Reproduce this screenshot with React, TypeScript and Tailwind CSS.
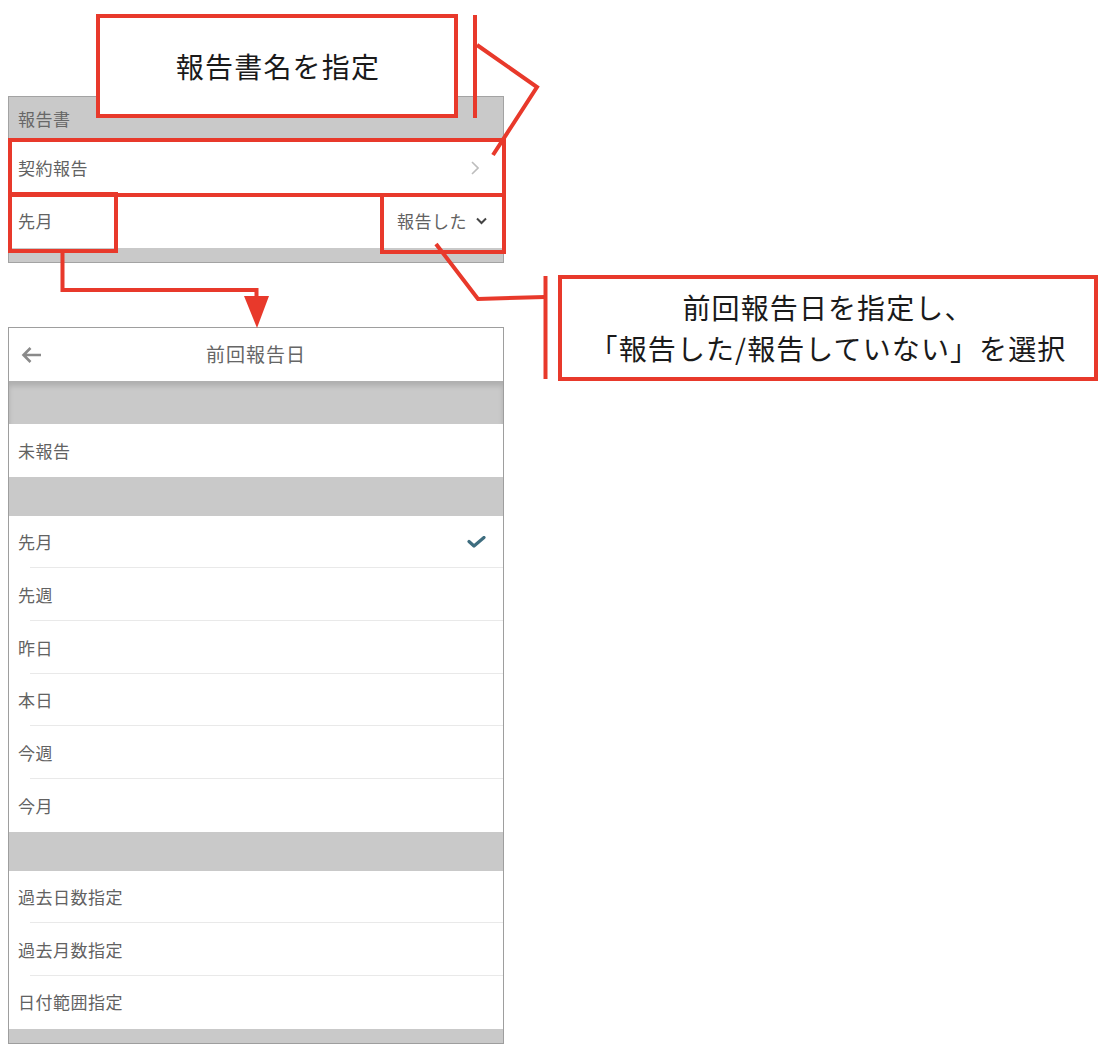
import React from "react";

const RED = "#e8392b";

type Row = { label: string; checked?: boolean };

const groups: Row[][] = [
  [{ label: "未報告" }],
  [
    { label: "先月", checked: true },
    { label: "先週" },
    { label: "昨日" },
    { label: "本日" },
    { label: "今週" },
    { label: "今月" },
  ],
  [{ label: "過去日数指定" }, { label: "過去月数指定" }, { label: "日付範囲指定" }],
];

function CheckIcon() {
  return (
    <svg width="19" height="12" viewBox="0 0 19 12" fill="none">
      <path d="M2 5.5 L7 10 L17 1.5" stroke="#3e6d7f" strokeWidth="3.2" strokeLinecap="round" strokeLinejoin="round" />
    </svg>
  );
}

function OptionRow({ row, last }: { row: Row; last: boolean }) {
  return (
    <div
      className={
        "relative h-[52.67px] bg-white flex items-center justify-between pl-[9px] pr-[17px] text-[17px] tracking-[0.5px] text-[#626262] " +
        (last ? "" : "after:absolute after:left-[21px] after:right-0 after:bottom-0 after:h-px after:bg-[#e9e9e9]")
      }
    >
      <span>{row.label}</span>
      {row.checked && <CheckIcon />}
    </div>
  );
}

export default function App() {
  return (
    <div className="relative w-[1106px] h-[1052px] bg-white overflow-hidden font-['Noto_Sans_CJK_JP','Noto_Sans',sans-serif]">
      <div className="flex flex-col pl-[8px] pt-[96px]">
        {/* 報告書 panel */}
        <div className="w-[496px] border border-[#a3a3a3] bg-[#c9c9c9]">
          <div className="h-[44px] flex items-center pl-[9px] text-[17px] tracking-[0.5px] text-[#676767]">報告書</div>
          <div className="h-[53px] bg-white flex items-center justify-between pl-[9px] pr-[24px] text-[17px] tracking-[0.5px] text-[#626262]">
            <span>契約報告</span>
            <svg width="8" height="14" viewBox="0 0 8 14" fill="none">
              <path d="M1 1 L7 7 L1 13" stroke="#bdbdbd" strokeWidth="1.6" />
            </svg>
          </div>
          <div className="h-[54px] bg-white flex items-center justify-between pl-[9px] pr-[16px] text-[17px] tracking-[0.5px] text-[#626262]">
            <span>先月</span>
            <div className="flex items-center gap-[9px]">
              <span>報告した</span>
              <svg width="11" height="8" viewBox="0 0 11 8" fill="none">
                <path d="M1 1.5 L5.5 6 L10 1.5" stroke="#444" strokeWidth="2" />
              </svg>
            </div>
          </div>
          <div className="h-[14px]" />
        </div>

        {/* 前回報告日 panel */}
        <div className="mt-[64px] w-[496px] border border-[#9e9e9e] bg-[#c9c9c9]">
          <div className="relative h-[53px] bg-white flex items-center justify-center text-[19px] tracking-[1px] text-[#666]">
            <svg className="absolute left-[12px] top-[18px]" width="21" height="18" viewBox="0 0 21 18" fill="none">
              <path d="M20 9 H2.5 M9.5 2 L2.5 9 L9.5 16" stroke="#8a8a8a" strokeWidth="2.6" />
            </svg>
            <span>前回報告日</span>
          </div>
          <div className="h-[43px] shadow-[inset_0_5px_5px_rgba(0,0,0,0.13)]" />
          {groups.map((g, gi) => (
            <div key={gi}>
              {gi > 0 && <div className="h-[39px]" />}
              {g.map((row, ri) => (
                <OptionRow key={row.label} row={row} last={ri === g.length - 1} />
              ))}
            </div>
          ))}
          <div className="h-[14px]" />
        </div>
      </div>

      {/* annotations */}
      <svg className="absolute inset-0 pointer-events-none" width="1106" height="1052" viewBox="0 0 1106 1052" fill="none">
        <rect x="10" y="140" width="494" height="55" stroke={RED} strokeWidth="4" />
        <rect x="10" y="194" width="106" height="57" stroke={RED} strokeWidth="4" />
        <rect x="382" y="195" width="122" height="57" stroke={RED} strokeWidth="4" />
        <line x1="475" y1="15" x2="475" y2="118" stroke={RED} strokeWidth="4" />
        <polyline points="477,45 537,87 493,155" stroke={RED} strokeWidth="4" strokeLinejoin="miter" />
        <polyline points="62.5,252 62.5,290 256.5,290 256.5,300" stroke={RED} strokeWidth="4" />
        <polygon points="244,296 269,296 257,328" fill={RED} />
        <polyline points="436,244 478,299 545,297" stroke={RED} strokeWidth="4" />
        <line x1="545.5" y1="276" x2="545.5" y2="379" stroke={RED} strokeWidth="4" />
      </svg>

      <div className="absolute left-[96px] top-[14px] w-[362px] h-[104px] border-4 border-[#e8392b] bg-white flex items-center justify-center pl-[2px] text-[28px] tracking-[1.2px] text-[#1a1a1a]">
        報告書名を指定
      </div>

      <div className="absolute left-[558px] top-[275px] w-[540px] h-[106px] border-4 border-[#e8392b] bg-white flex flex-col items-center justify-center text-[28px] leading-[41px] tracking-[1.1px] text-[#1a1a1a]">
        <span>前回報告日を指定し、</span>
        <span>「報告した/報告していない」を選択</span>
      </div>
    </div>
  );
}
